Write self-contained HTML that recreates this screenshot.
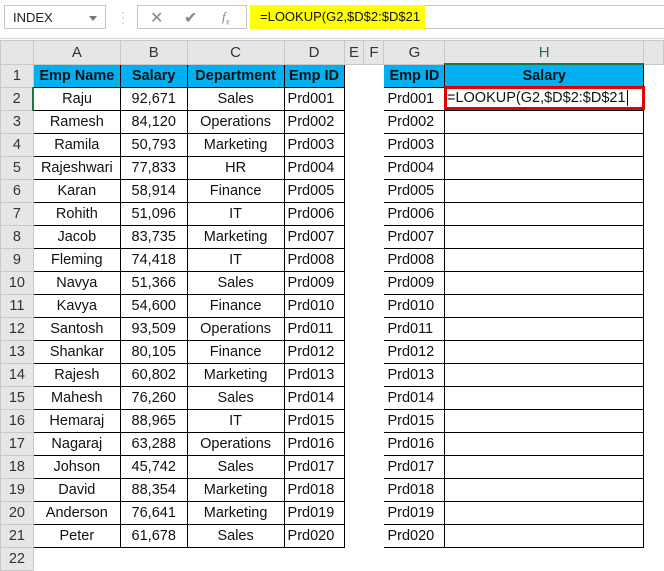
<!DOCTYPE html>
<html><head><meta charset="utf-8"><style>
body{margin:0;width:664px;height:565px;overflow:hidden;background:#fff;font-family:"Liberation Sans",sans-serif;position:relative}
.top{position:absolute;left:0;top:0;width:664px;height:38px;background:#fff;border-bottom:1px solid #d4d4d4}
.nb{position:absolute;left:4px;top:5px;width:102px;height:24px;border:1px solid #c6c6c6;font-size:13px;line-height:24px;padding-left:8px;box-sizing:border-box;color:#222}
.nb:after{content:"";position:absolute;right:8px;top:10px;border:4px solid transparent;border-top:5px solid #777}
.dots{position:absolute;left:121px;top:10px;color:#aaa;font-size:12px;line-height:5px}
.fx{position:absolute;left:137px;top:5px;width:110px;height:24px;border:1px solid #c6c6c6;box-sizing:border-box;color:#888}
.form{position:absolute;left:250px;top:5px;width:414px;height:24px;border:1px solid #c6c6c6;border-right:none;box-sizing:border-box}
.yel{position:absolute;left:250px;top:5px;width:175px;height:24px;background:#ffff00;font-size:13px;line-height:24px;padding-left:10px;box-sizing:border-box;color:#111}
table{position:absolute;left:0;top:40px;border-collapse:collapse;table-layout:fixed;font-size:14.5px;color:#111}
td{height:22px;padding:0 3px;border:1px solid #fff;white-space:nowrap;overflow:hidden;text-align:center}
tr.ch td{background:#e6e6e6;border-color:#c8c8c8;font-size:15px;color:#333}
td.rh{background:#e6e6e6;border-color:#c8c8c8;color:#333;text-align:center;padding:0}
td.b{border:1px solid #000}
td.l{text-align:left}
td.h{background:#00b0f0;font-weight:bold;border:1px solid #000}
.red{position:absolute;left:444px;top:86px;width:201px;height:24px;border:3px solid #e00000;box-sizing:border-box;font-size:14.5px;line-height:18px;padding-left:0px;color:#111}
</style></head><body>
<div class="top">
<div class="nb">INDEX</div>
<div class="dots">·<br>·<br>·</div>
<div class="fx"><span style="position:absolute;left:12px;top:2px;font-size:16px">✕</span><span style="position:absolute;left:46px;top:2px;font-size:16px">✔</span><span style="position:absolute;left:84px;top:3px;font-size:13px;font-style:italic;font-family:'Liberation Serif',serif">f<sub style="font-size:9px">x</sub></span></div>
<div class="form"></div>
<div class="yel">=LOOKUP(G2,$D$2:$D$21</div>
</div>
<table>
<colgroup><col style="width:33px"><col style="width:87px"><col style="width:67px"><col style="width:97px"><col style="width:60px"><col style="width:20px"><col style="width:20px"><col style="width:61px"><col style="width:200px"><col style="width:20px"></colgroup>
<tr class="ch"><td style="background:#e6e6e6"></td><td>A</td><td>B</td><td>C</td><td>D</td><td>E</td><td>F</td><td>G</td><td style="color:#217346;border-bottom:2px solid #217346">H</td><td></td></tr>
<tr><td class="rh">1</td><td class="h">Emp Name</td><td class="h">Salary</td><td class="h">Department</td><td class="h">Emp ID</td><td></td><td></td><td class="h">Emp ID</td><td class="h">Salary</td><td></td></tr>
<tr><td class="rh" style="border-right:2px solid #217346">2</td><td class="b">Raju</td><td class="b">92,671</td><td class="b">Sales</td><td class="b l">Prd001</td><td></td><td></td><td class="b l">Prd001</td><td class="b"></td><td></td></tr>
<tr><td class="rh">3</td><td class="b">Ramesh</td><td class="b">84,120</td><td class="b">Operations</td><td class="b l">Prd002</td><td></td><td></td><td class="b l">Prd002</td><td class="b"></td><td></td></tr>
<tr><td class="rh">4</td><td class="b">Ramila</td><td class="b">50,793</td><td class="b">Marketing</td><td class="b l">Prd003</td><td></td><td></td><td class="b l">Prd003</td><td class="b"></td><td></td></tr>
<tr><td class="rh">5</td><td class="b">Rajeshwari</td><td class="b">77,833</td><td class="b">HR</td><td class="b l">Prd004</td><td></td><td></td><td class="b l">Prd004</td><td class="b"></td><td></td></tr>
<tr><td class="rh">6</td><td class="b">Karan</td><td class="b">58,914</td><td class="b">Finance</td><td class="b l">Prd005</td><td></td><td></td><td class="b l">Prd005</td><td class="b"></td><td></td></tr>
<tr><td class="rh">7</td><td class="b">Rohith</td><td class="b">51,096</td><td class="b">IT</td><td class="b l">Prd006</td><td></td><td></td><td class="b l">Prd006</td><td class="b"></td><td></td></tr>
<tr><td class="rh">8</td><td class="b">Jacob</td><td class="b">83,735</td><td class="b">Marketing</td><td class="b l">Prd007</td><td></td><td></td><td class="b l">Prd007</td><td class="b"></td><td></td></tr>
<tr><td class="rh">9</td><td class="b">Fleming</td><td class="b">74,418</td><td class="b">IT</td><td class="b l">Prd008</td><td></td><td></td><td class="b l">Prd008</td><td class="b"></td><td></td></tr>
<tr><td class="rh">10</td><td class="b">Navya</td><td class="b">51,366</td><td class="b">Sales</td><td class="b l">Prd009</td><td></td><td></td><td class="b l">Prd009</td><td class="b"></td><td></td></tr>
<tr><td class="rh">11</td><td class="b">Kavya</td><td class="b">54,600</td><td class="b">Finance</td><td class="b l">Prd010</td><td></td><td></td><td class="b l">Prd010</td><td class="b"></td><td></td></tr>
<tr><td class="rh">12</td><td class="b">Santosh</td><td class="b">93,509</td><td class="b">Operations</td><td class="b l">Prd011</td><td></td><td></td><td class="b l">Prd011</td><td class="b"></td><td></td></tr>
<tr><td class="rh">13</td><td class="b">Shankar</td><td class="b">80,105</td><td class="b">Finance</td><td class="b l">Prd012</td><td></td><td></td><td class="b l">Prd012</td><td class="b"></td><td></td></tr>
<tr><td class="rh">14</td><td class="b">Rajesh</td><td class="b">60,802</td><td class="b">Marketing</td><td class="b l">Prd013</td><td></td><td></td><td class="b l">Prd013</td><td class="b"></td><td></td></tr>
<tr><td class="rh">15</td><td class="b">Mahesh</td><td class="b">76,260</td><td class="b">Sales</td><td class="b l">Prd014</td><td></td><td></td><td class="b l">Prd014</td><td class="b"></td><td></td></tr>
<tr><td class="rh">16</td><td class="b">Hemaraj</td><td class="b">88,965</td><td class="b">IT</td><td class="b l">Prd015</td><td></td><td></td><td class="b l">Prd015</td><td class="b"></td><td></td></tr>
<tr><td class="rh">17</td><td class="b">Nagaraj</td><td class="b">63,288</td><td class="b">Operations</td><td class="b l">Prd016</td><td></td><td></td><td class="b l">Prd016</td><td class="b"></td><td></td></tr>
<tr><td class="rh">18</td><td class="b">Johson</td><td class="b">45,742</td><td class="b">Sales</td><td class="b l">Prd017</td><td></td><td></td><td class="b l">Prd017</td><td class="b"></td><td></td></tr>
<tr><td class="rh">19</td><td class="b">David</td><td class="b">88,354</td><td class="b">Marketing</td><td class="b l">Prd018</td><td></td><td></td><td class="b l">Prd018</td><td class="b"></td><td></td></tr>
<tr><td class="rh">20</td><td class="b">Anderson</td><td class="b">76,641</td><td class="b">Marketing</td><td class="b l">Prd019</td><td></td><td></td><td class="b l">Prd019</td><td class="b"></td><td></td></tr>
<tr><td class="rh">21</td><td class="b">Peter</td><td class="b">61,678</td><td class="b">Sales</td><td class="b l">Prd020</td><td></td><td></td><td class="b l">Prd020</td><td class="b"></td><td></td></tr>
<tr><td class="rh">22</td><td></td><td></td><td></td><td></td><td></td><td></td><td></td><td></td><td></td></tr>
</table>
<div class="red">=LOOKUP(G2,$D$2:$D$21<span style="border-left:1px solid #000;margin-left:1px"></span></div>
</body></html>
